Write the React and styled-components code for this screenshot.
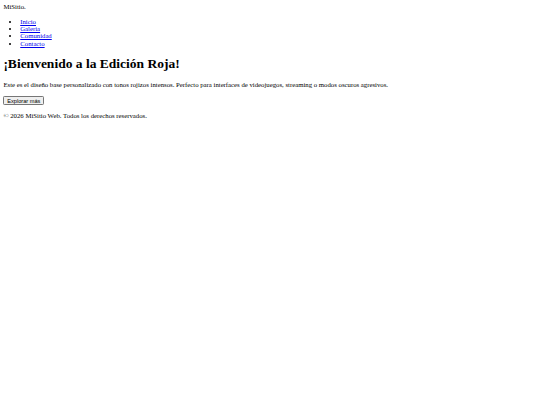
import React from "react";
import styled, { createGlobalStyle } from "styled-components";

// the page is a default-styled document seen at 540/1280 scale
const S = 0.421875;
const px = (v) => `${v * S}px`;

const GlobalStyle = createGlobalStyle`
  html, body {
    background: #ffffff;
  }
  body {
    margin: ${px(8)};
    font-family: "Liberation Serif", "Times New Roman", serif;
    font-size: ${px(16)};
    line-height: 1.1;
    color: #000000;
  }
`;

const Header = styled.header`
  display: block;
`;

const Logo = styled.div`
  font-size: ${px(16)};
`;

const NavList = styled.ul`
  margin: ${px(16)} 0;
  padding-left: ${px(40)};
  list-style: disc;
`;

const NavItem = styled.li`
  font-size: ${px(16)};
`;

const NavLink = styled.a`
  color: #0000ee;
  text-decoration: underline;
`;

const Main = styled.main`
  display: block;
`;

const Title = styled.h1`
  font-size: ${px(32)};
  line-height: 1.2;
  font-weight: bold;
  margin: ${px(21.44)} 0;
`;

const Text = styled.p`
  margin: ${px(16)} 0;
`;

const Button = styled.button`
  font-family: "Liberation Sans", Arial, sans-serif;
  font-size: ${px(13.333)};
  line-height: normal;
  padding: ${px(2)} ${px(7)};
  margin: 0;
  background: #efefef;
  color: #000000;
  border: 1px solid #767676;
  border-radius: ${px(3)};
`;

const Footer = styled.footer`
  display: block;
`;

const links = ["Inicio", "Galeria", "Comunidad", "Contacto"];

export default function App() {
  return (
    <>
      <GlobalStyle />
      <Header>
        <Logo>MiSitio.</Logo>
        <nav>
          <NavList>
            {links.map((l) => (
              <NavItem key={l}>
                <NavLink href="#">{l}</NavLink>
              </NavItem>
            ))}
          </NavList>
        </nav>
      </Header>
      <Main>
        <Title>¡Bienvenido a la Edición Roja!</Title>
        <Text>
          Este es el diseño base personalizado con tonos rojizos intensos.
          Perfecto para interfaces de videojuegos, streaming o modos oscuros
          agresivos.
        </Text>
        <Button>Explorar más</Button>
      </Main>
      <Footer>
        <Text>© 2026 MiSitio Web. Todos los derechos reservados.</Text>
      </Footer>
    </>
  );
}
